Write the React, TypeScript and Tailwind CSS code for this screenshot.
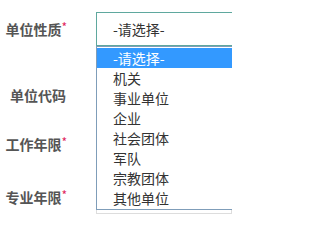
const options = ['-请选择-', '机关', '事业单位', '企业', '社会团体', '军队', '宗教团体', '其他单位'];

function Label({ text, required }: { text: string; required?: boolean }) {
    return (
        <div className={`w-[67px] shrink-0 text-right text-[14px] font-bold text-[#555] ${required ? '' : 'pr-[1px]'}`}>
            {text}
            {required && <span className="text-[#e0245e] text-[12px] font-normal relative -top-[3px]">*</span>}
        </div>
    );
}

function Field({ children }: { children?: React.ReactNode }) {
    return (
        <div className="ml-[29px] h-[34px] flex-1 border border-[#ddd] bg-white flex items-center pl-[16px] text-[14px] text-[#333]">
            {children}
        </div>
    );
}

export default function App() {
    return (
        <div
            className="relative w-[232px] h-[224px] overflow-hidden bg-white"
            style={{ fontFamily: '"Noto Sans CJK SC", "Noto Sans", sans-serif' }}
        >
            <div className="flex flex-col">
                <div className="mt-[12px] flex items-center">
                    <Label text="单位性质" required />
                    <div className="ml-[29px] h-[34px] flex-1 border border-[#5fa89e] border-r-0 bg-white flex items-center pl-[16px] text-[14px] text-[#333]">
                        -请选择-
                    </div>
                </div>
                <div className="mt-[32px] flex items-center">
                    <Label text="单位代码" />
                    <Field />
                </div>
                <div className="mt-[15px] flex items-center">
                    <Label text="工作年限" required />
                    <Field />
                </div>
                <div className="mt-[19px] flex items-center">
                    <Label text="专业年限" required />
                    <Field />
                </div>
            </div>

            {/* open select list */}
            <ul className="absolute left-[96px] top-[46px] w-[150px] border border-[#7f9db9] bg-white pt-[1px] pb-[1px] text-[14px] text-[#333]">
                {options.map((o, i) => (
                    <li
                        key={o}
                        className={`h-[20px] leading-[20px] pl-[16px] whitespace-nowrap ${i === 0 ? 'bg-[#3399ff] text-white' : ''}`}
                    >
                        {o}
                    </li>
                ))}
            </ul>
        </div>
    );
}
